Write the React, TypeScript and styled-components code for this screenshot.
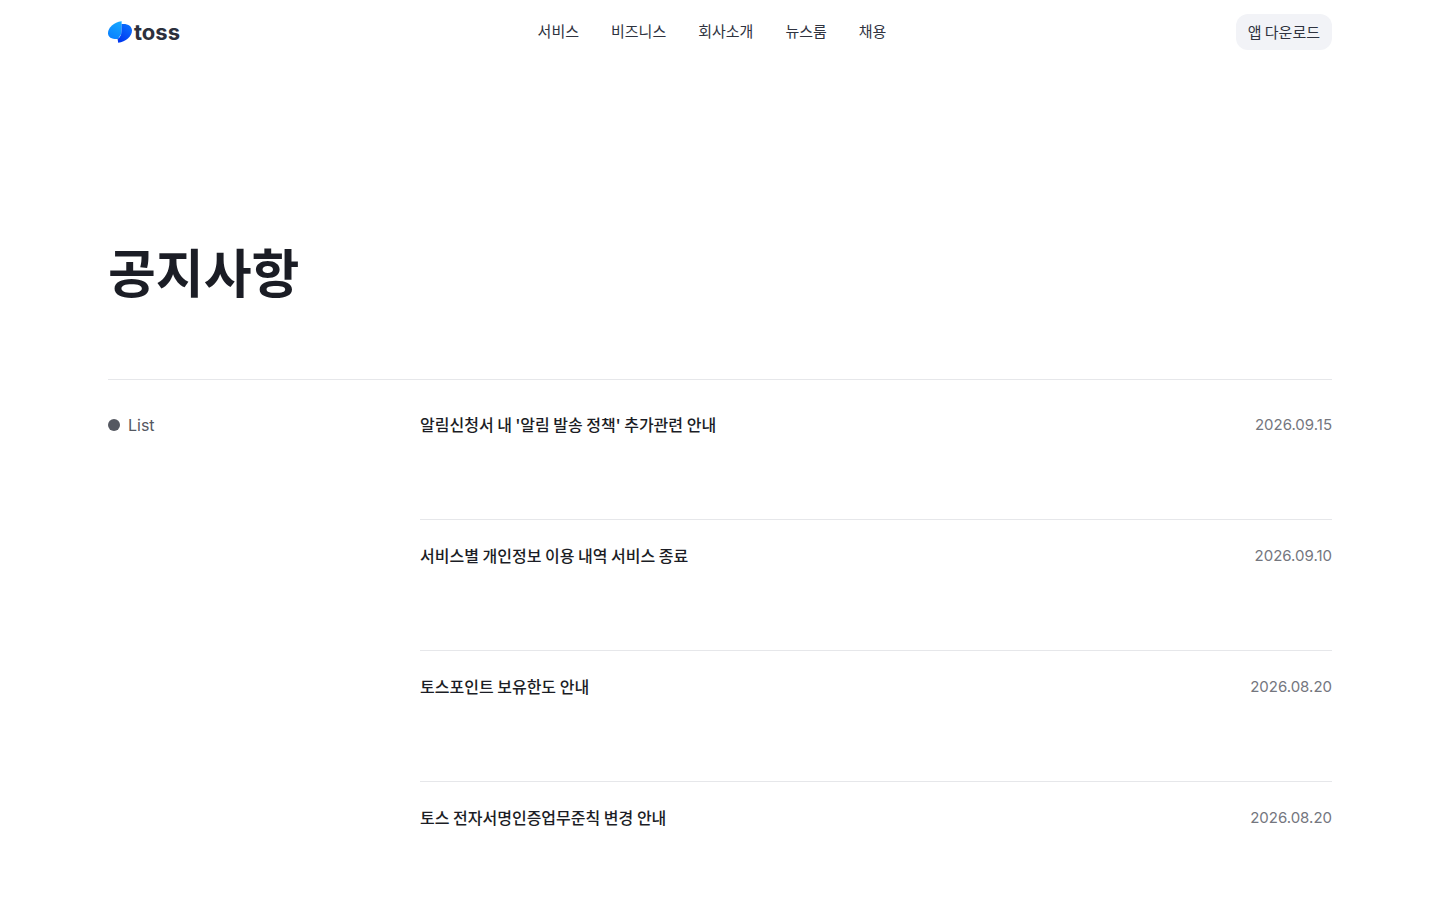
import React from "react";
import styled, { createGlobalStyle } from "styled-components";

const GlobalStyle = createGlobalStyle`
  * { box-sizing: border-box; }
  body {
    margin: 0;
    background: #ffffff;
    color: #1b1d25;
    font-family: "Inter", "Noto Sans CJK KR", sans-serif;
    -webkit-font-smoothing: antialiased;
  }
  a { color: inherit; text-decoration: none; }
`;

const Header = styled.header`
  display: grid;
  grid-template-columns: 1fr auto 1fr;
  align-items: center;
  height: 64px;
  padding: 0 108px;
`;

const LogoLink = styled.a`
  display: flex;
  align-items: center;
  gap: 2px;
  justify-self: start;
`;

const Wordmark = styled.span`
  font-size: 22px;
  line-height: 24px;
  font-weight: 700;
  color: #2c303d;
`;

const Nav = styled.nav`
  display: flex;
  gap: 32px;
  padding: 0 16px 2px 0;
`;

const NavLink = styled.a`
  font-family: "Noto Sans CJK KR", sans-serif;
  font-size: 15px;
  line-height: 24px;
  color: #2f333f;
`;

const DownloadButton = styled.button`
  justify-self: end;
  height: 36px;
  padding: 0 12px;
  border: 0;
  border-radius: 12px;
  background: #f2f3f7;
  color: #2f333f;
  font-family: "Noto Sans CJK KR", sans-serif;
  font-size: 15px;
  line-height: 24px;
  cursor: pointer;
`;

const Main = styled.main`
  padding: 168px 108px 0;
`;

const Title = styled.h1`
  margin: 0 0 69px;
  font-family: "Noto Sans CJK KR", sans-serif;
  font-size: 52px;
  line-height: 78px;
  font-weight: 700;
`;

const Board = styled.section`
  display: grid;
  grid-template-columns: 312px 1fr;
  align-items: start;
  border-top: 1px solid #e6e7ea;
  padding-top: 9px;
`;

const Category = styled.h2`
  display: flex;
  align-items: center;
  gap: 8px;
  margin: 24px 0 0;
  font-size: 16px;
  line-height: 24px;
  font-weight: 400;
  color: #555861;
`;

const Dot = styled.span`
  width: 12px;
  height: 12px;
  border-radius: 50%;
  background: #555861;
`;

const NoticeList = styled.ul`
  margin: 0;
  padding: 0;
  list-style: none;
`;

const NoticeItem = styled.li`
  border-bottom: 1px solid #e6e7ea;
`;

const NoticeLink = styled.a`
  display: flex;
  align-items: flex-start;
  justify-content: space-between;
  padding: 24px 0 82px;
`;

const NoticeTitle = styled.span`
  font-family: "Noto Sans CJK KR", sans-serif;
  font-size: 16px;
  line-height: 22px;
  font-weight: 500;
`;

const NoticeDate = styled.time`
  font-size: 15px;
  line-height: 24px;
  color: #74767e;
`;

const menu = ["서비스", "비즈니스", "회사소개", "뉴스룸", "채용"];

const notices = [
  { title: "알림신청서 내 '알림 발송 정책' 추가관련 안내", date: "2026.09.15" },
  { title: "서비스별 개인정보 이용 내역 서비스 종료", date: "2026.09.10" },
  { title: "토스포인트 보유한도 안내", date: "2026.08.20" },
  { title: "토스 전자서명인증업무준칙 변경 안내", date: "2026.08.20" },
];

const LogoMark = () => (
  <svg width="24" height="24" viewBox="0 0 24 24" aria-hidden="true">
    <defs>
      <linearGradient id="leaf" x1="0.8" y1="0" x2="0.3" y2="1">
        <stop offset="0" stopColor="#16a8ff" />
        <stop offset="1" stopColor="#0a80ff" />
      </linearGradient>
      <linearGradient id="body" x1="0.9" y1="0" x2="0.3" y2="1">
        <stop offset="0" stopColor="#0a74ff" />
        <stop offset="1" stopColor="#0038f0" />
      </linearGradient>
    </defs>
    <path d="M13.4 1.2 C6 2.2 0 7.4 0 13.2 C0 17.4 4 19.3 10 19 L13.6 13.5 V1.2 Z" fill="url(#leaf)" />
    <path d="M13.6 4 C20 3.4 24 6.2 24 10.6 C24 16.4 17.8 21.8 10.2 22.8 L9.6 19 C12.4 17.2 13.6 14.4 13.6 11 Z" fill="url(#body)" />
  </svg>
);

export default function App() {
  return (
    <>
      <GlobalStyle />
      <Header>
        <LogoLink href="#" aria-label="toss">
          <LogoMark />
          <Wordmark>toss</Wordmark>
        </LogoLink>
        <Nav>
          {menu.map((label) => (
            <NavLink key={label} href="#">{label}</NavLink>
          ))}
        </Nav>
        <DownloadButton type="button">앱 다운로드</DownloadButton>
      </Header>
      <Main>
        <Title>공지사항</Title>
        <Board>
          <Category><Dot />List</Category>
          <NoticeList>
            {notices.map(({ title, date }) => (
              <NoticeItem key={title}>
                <NoticeLink href="#">
                  <NoticeTitle>{title}</NoticeTitle>
                  <NoticeDate dateTime={date.replaceAll(".", "-")}>{date}</NoticeDate>
                </NoticeLink>
              </NoticeItem>
            ))}
          </NoticeList>
        </Board>
      </Main>
    </>
  );
}
